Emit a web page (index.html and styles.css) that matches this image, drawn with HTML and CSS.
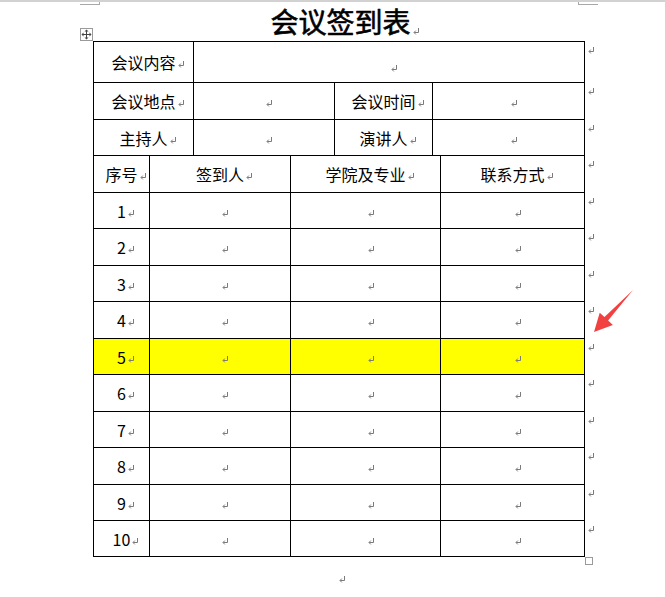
FILE: index.html
```html
<!DOCTYPE html>
<html lang="zh-CN">
<head>
<meta charset="utf-8">
<title>会议签到表</title>
<link rel="stylesheet" href="styles.css">
</head>
<body>
<svg class="defs" width="0" height="0" aria-hidden="true">
  <symbol id="pm" viewBox="0 0 7 7">
    <path d="M5.5 0V4.5H1.2" fill="none" stroke="#7a7a7a" stroke-width="1"/>
    <path d="M2.8 2.6L1 4.5L2.8 6.4" fill="none" stroke="#7a7a7a" stroke-width="1"/>
  </symbol>
</svg>
<div class="topline"></div>
<div class="corners"><div class="corner-l"></div><div class="corner-r"></div></div>
<h1 class="title">会议签到表<svg class="pm pm-title"><use href="#pm"/></svg></h1>
<div class="sheet">
  <div class="move">
    <svg width="11" height="11" viewBox="0 0 11 11">
      <path d="M5.5 1.5V9.5M1.5 5.5H9.5" stroke="#444" stroke-width="1"/>
      <path d="M5.5 0.5L3.5 2.5H7.5Z M5.5 10.5L3.5 8.5H7.5Z M0.5 5.5L2.5 3.5V7.5Z M10.5 5.5L8.5 3.5V7.5Z" fill="#444"/>
    </svg>
  </div>
  <div class="grid">
    <div class="cell s2"><span class="t">会议内容<svg class="pm"><use href="#pm"/></svg></span></div>
    <div class="cell s5"><span class="t low"><svg class="pm"><use href="#pm"/></svg></span></div>

    <div class="cell s2"><span class="t">会议地点<svg class="pm"><use href="#pm"/></svg></span></div>
    <div class="cell s2"><span class="t"><svg class="pm"><use href="#pm"/></svg></span></div>
    <div class="cell"><span class="t">会议时间<svg class="pm"><use href="#pm"/></svg></span></div>
    <div class="cell s2"><span class="t"><svg class="pm"><use href="#pm"/></svg></span></div>

    <div class="cell s2"><span class="t">主持人<svg class="pm"><use href="#pm"/></svg></span></div>
    <div class="cell s2"><span class="t"><svg class="pm"><use href="#pm"/></svg></span></div>
    <div class="cell"><span class="t">演讲人<svg class="pm"><use href="#pm"/></svg></span></div>
    <div class="cell s2"><span class="t"><svg class="pm"><use href="#pm"/></svg></span></div>

    <div class="cell"><span class="t">序号<svg class="pm"><use href="#pm"/></svg></span></div>
    <div class="cell s2"><span class="t">签到人<svg class="pm"><use href="#pm"/></svg></span></div>
    <div class="cell s3"><span class="t">学院及专业<svg class="pm"><use href="#pm"/></svg></span></div>
    <div class="cell"><span class="t">联系方式<svg class="pm"><use href="#pm"/></svg></span></div>

    <div class="cell"><span class="t num">1<svg class="pm"><use href="#pm"/></svg></span></div>
    <div class="cell s2"><span class="t"><svg class="pm"><use href="#pm"/></svg></span></div>
    <div class="cell s3"><span class="t"><svg class="pm"><use href="#pm"/></svg></span></div>
    <div class="cell"><span class="t"><svg class="pm"><use href="#pm"/></svg></span></div>

    <div class="cell"><span class="t num">2<svg class="pm"><use href="#pm"/></svg></span></div>
    <div class="cell s2"><span class="t"><svg class="pm"><use href="#pm"/></svg></span></div>
    <div class="cell s3"><span class="t"><svg class="pm"><use href="#pm"/></svg></span></div>
    <div class="cell"><span class="t"><svg class="pm"><use href="#pm"/></svg></span></div>

    <div class="cell"><span class="t num">3<svg class="pm"><use href="#pm"/></svg></span></div>
    <div class="cell s2"><span class="t"><svg class="pm"><use href="#pm"/></svg></span></div>
    <div class="cell s3"><span class="t"><svg class="pm"><use href="#pm"/></svg></span></div>
    <div class="cell"><span class="t"><svg class="pm"><use href="#pm"/></svg></span></div>

    <div class="cell"><span class="t num">4<svg class="pm"><use href="#pm"/></svg></span></div>
    <div class="cell s2"><span class="t"><svg class="pm"><use href="#pm"/></svg></span></div>
    <div class="cell s3"><span class="t"><svg class="pm"><use href="#pm"/></svg></span></div>
    <div class="cell"><span class="t"><svg class="pm"><use href="#pm"/></svg></span></div>

    <div class="cell hl"><span class="t num">5<svg class="pm"><use href="#pm"/></svg></span></div>
    <div class="cell hl s2"><span class="t"><svg class="pm"><use href="#pm"/></svg></span></div>
    <div class="cell hl s3"><span class="t"><svg class="pm"><use href="#pm"/></svg></span></div>
    <div class="cell hl"><span class="t"><svg class="pm"><use href="#pm"/></svg></span></div>

    <div class="cell"><span class="t num">6<svg class="pm"><use href="#pm"/></svg></span></div>
    <div class="cell s2"><span class="t"><svg class="pm"><use href="#pm"/></svg></span></div>
    <div class="cell s3"><span class="t"><svg class="pm"><use href="#pm"/></svg></span></div>
    <div class="cell"><span class="t"><svg class="pm"><use href="#pm"/></svg></span></div>

    <div class="cell"><span class="t num">7<svg class="pm"><use href="#pm"/></svg></span></div>
    <div class="cell s2"><span class="t"><svg class="pm"><use href="#pm"/></svg></span></div>
    <div class="cell s3"><span class="t"><svg class="pm"><use href="#pm"/></svg></span></div>
    <div class="cell"><span class="t"><svg class="pm"><use href="#pm"/></svg></span></div>

    <div class="cell"><span class="t num">8<svg class="pm"><use href="#pm"/></svg></span></div>
    <div class="cell s2"><span class="t"><svg class="pm"><use href="#pm"/></svg></span></div>
    <div class="cell s3"><span class="t"><svg class="pm"><use href="#pm"/></svg></span></div>
    <div class="cell"><span class="t"><svg class="pm"><use href="#pm"/></svg></span></div>

    <div class="cell"><span class="t num">9<svg class="pm"><use href="#pm"/></svg></span></div>
    <div class="cell s2"><span class="t"><svg class="pm"><use href="#pm"/></svg></span></div>
    <div class="cell s3"><span class="t"><svg class="pm"><use href="#pm"/></svg></span></div>
    <div class="cell"><span class="t"><svg class="pm"><use href="#pm"/></svg></span></div>

    <div class="cell"><span class="t num">10<svg class="pm"><use href="#pm"/></svg></span></div>
    <div class="cell s2"><span class="t"><svg class="pm"><use href="#pm"/></svg></span></div>
    <div class="cell s3"><span class="t"><svg class="pm"><use href="#pm"/></svg></span></div>
    <div class="cell"><span class="t"><svg class="pm"><use href="#pm"/></svg></span></div>
  </div>
  <div class="marks">
    <div class="edge"><svg class="pm-edge"><use href="#pm"/></svg></div>
    <div class="edge"><svg class="pm-edge"><use href="#pm"/></svg></div>
    <div class="edge"><svg class="pm-edge"><use href="#pm"/></svg></div>
    <div class="edge"><svg class="pm-edge"><use href="#pm"/></svg></div>
    <div class="edge"><svg class="pm-edge"><use href="#pm"/></svg></div>
    <div class="edge"><svg class="pm-edge"><use href="#pm"/></svg></div>
    <div class="edge"><svg class="pm-edge"><use href="#pm"/></svg></div>
    <div class="edge"><svg class="pm-edge"><use href="#pm"/></svg></div>
    <div class="edge"><svg class="pm-edge"><use href="#pm"/></svg></div>
    <div class="edge"><svg class="pm-edge"><use href="#pm"/></svg></div>
    <div class="edge"><svg class="pm-edge"><use href="#pm"/></svg></div>
    <div class="edge"><svg class="pm-edge"><use href="#pm"/></svg></div>
    <div class="edge"><svg class="pm-edge"><use href="#pm"/></svg></div>
    <div class="edge"><svg class="pm-edge"><use href="#pm"/></svg></div>
    <div class="resize"></div>
  </div>
</div>
<div class="after"><svg class="pm-edge pm-after"><use href="#pm"/></svg></div>
<svg class="arrow" width="48" height="50" viewBox="0 0 48 50">
  <polygon points="43,4 18.1,34.5 22.9,38.9 4,46 9.7,26.7 14.5,31.1" fill="#f24141"/>
</svg>
</body>
</html>
```

FILE: styles.css
```css
body {
  margin: 0;
  width: 665px;
  height: 597px;
  overflow: hidden;
  position: relative;
  background: #fff;
  color: #000;
  font-family: "Noto Sans CJK SC", "Noto Sans", sans-serif;
}

.defs {
  position: absolute;
  width: 0;
  height: 0;
}

.topline {
  height: 2px;
  background: #d2d2d2;
}

.corners {
  display: flex;
  height: 3px;
  padding-left: 80px;
}

.corner-l {
  width: 19px;
  height: 2px;
  border-right: 1px solid #a8a8a8;
  border-bottom: 1px solid #a8a8a8;
}

.corner-r {
  width: 19px;
  height: 2px;
  margin-left: 478px;
  border-left: 1px solid #a8a8a8;
  border-bottom: 1px solid #a8a8a8;
}

.title {
  margin: 0 0 4px 99px;
  width: 479px;
  height: 32px;
  padding-left: 4px;
  box-sizing: border-box;
  text-align: center;
  font-size: 28px;
  font-weight: 400;
  -webkit-text-stroke: 0.6px #000;
  line-height: 32px;
  white-space: nowrap;
}

.pm {
  width: 7px;
  height: 7px;
  margin-left: 2px;
  margin-right: -9px;
  vertical-align: middle;
}

.pm-title {
  vertical-align: -2px;
}

.sheet {
  position: relative;
  display: flex;
  align-items: flex-start;
  margin-left: 93px;
}

.move {
  position: absolute;
  left: -13px;
  top: -13px;
  width: 13px;
  height: 13px;
  box-sizing: border-box;
  border: 1px solid #9a9a9a;
  background: #fff;
  display: flex;
  align-items: center;
  justify-content: center;
}

.grid {
  display: grid;
  grid-template-columns: 55px 43px 96px 43px 97px 7px 143px;
  grid-template-rows: 40px 36px 35px 36px 35px 36px 35px 36px 35px 36px 35px 36px 35px 35px;
  gap: 1px;
  padding: 1px;
  background: #000;
}

.cell {
  background: #fff;
  display: flex;
  align-items: center;
  justify-content: center;
  font-size: 16px;
  line-height: 20px;
  white-space: nowrap;
}

.hl {
  background: #ffff00;
}

.s2 { grid-column: span 2; }
.s3 { grid-column: span 3; }
.s5 { grid-column: span 5; }

.low {
  margin-top: 8px;
}

.marks {
  display: grid;
  grid-template-rows: 40px 36px 35px 36px 35px 36px 35px 36px 35px 36px 35px 36px 35px 35px 8px;
  row-gap: 1px;
  padding-top: 1px;
}

.edge {
  padding: 5px 0 0 3px;
}

.pm-edge {
  display: block;
  width: 7px;
  height: 7px;
}

.resize {
  width: 8px;
  height: 8px;
  box-sizing: border-box;
  border: 1px solid #9a9a9a;
}

.after {
  display: flex;
  justify-content: center;
  margin-left: 99px;
  width: 479px;
  padding-top: 11px;
}

.pm-after {
  margin-left: 7px;
}

.arrow {
  position: absolute;
  left: 590px;
  top: 286px;
}
```
